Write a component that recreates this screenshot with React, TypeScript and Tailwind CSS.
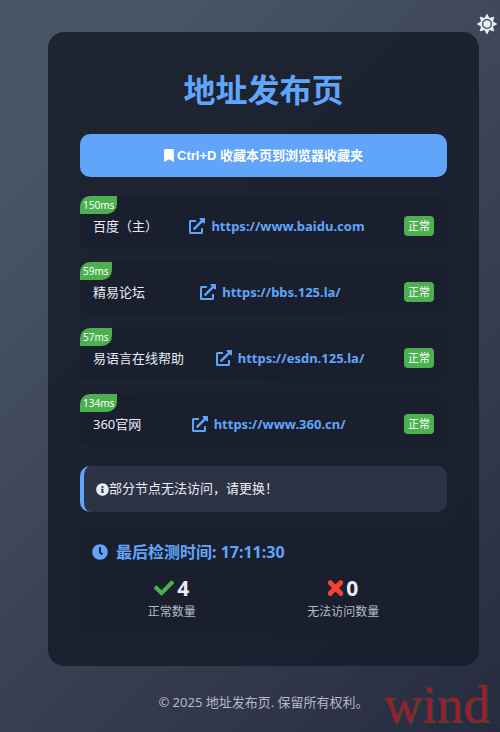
import type { ReactNode } from 'react';
import {
  FaBookmark,
  FaCheck,
  FaClock,
  FaExternalLinkAlt,
  FaInfoCircle,
  FaSun,
  FaTimes,
} from 'react-icons/fa';

interface Site {
  name: string;
  url: string;
  ping: number;
}

const sites: Site[] = [
  { name: '百度（主）', url: 'https://www.baidu.com', ping: 150 },
  { name: '精易论坛', url: 'https://bbs.125.la/', ping: 59 },
  { name: '易语言在线帮助', url: 'https://esdn.125.la/', ping: 57 },
  { name: '360官网', url: 'https://www.360.cn/', ping: 134 },
];

function SiteRow({ site }: { site: Site }) {
  return (
    <li className="relative flex h-[53px] items-center justify-between rounded-[10px] bg-[#1a1f2e] px-[13px] pt-1.5">
      <span className="absolute left-0 top-0 rounded-br-[10px] rounded-tl-[10px] bg-[#4caf50] px-[3px] text-[10px] leading-[18px] text-white">
        {site.ping}ms
      </span>
      <span className="text-[13px] leading-5">{site.name}</span>
      <a href={site.url} className="mr-2 flex items-center gap-1.5 text-[13px] font-bold leading-5 text-[#60a5fa]">
        <FaExternalLinkAlt size={16} />
        {site.url}
      </a>
      <span className="rounded bg-[#4caf50] px-1 text-[11px] leading-5 text-white">正常</span>
    </li>
  );
}

function Stat({ icon, value, label }: { icon: ReactNode; value: number; label: string }) {
  return (
    <div className="flex flex-col items-center">
      <div className="flex items-center gap-[3px] text-[21px] font-bold leading-7">
        {icon}
        {value}
      </div>
      <div className="text-xs leading-5 text-[#b4bac8]">{label}</div>
    </div>
  );
}

export default function App() {
  return (
    <div className="relative flex min-h-screen flex-col bg-linear-135 from-[#475567] from-15% via-[#3d4357] to-[#272b3f] pb-4 pl-12 pr-[21px] pt-8 font-['Noto_Sans','Noto_Sans_CJK_SC',sans-serif] text-[#e8ecf6]">
      <button type="button" aria-label="切换主题" className="absolute right-[3px] top-3.5 text-[#e8ecf6]">
        <FaSun size={20} />
      </button>

      <main className="rounded-2xl bg-linear-135 from-[#1f2431] to-[#1a1f2f] p-8">
        <h1 className="mb-[18px] text-center text-[32px] font-bold leading-[52px] text-[#60a5fa]">地址发布页</h1>

        <button
          type="button"
          className="mb-[19px] flex h-[43px] w-full items-center justify-center gap-[3px] rounded-[10px] bg-[#60a5fa] font-['Liberation_Sans','Noto_Sans_CJK_SC',sans-serif] text-[13px] font-bold text-white"
        >
          <FaBookmark className="h-[13px] w-2.5" />
          Ctrl+D 收藏本页到浏览器收藏夹
        </button>

        <ul className="mb-[19px] flex flex-col gap-[13px]">
          {sites.map((site) => (
            <SiteRow key={site.url} site={site} />
          ))}
        </ul>

        <div className="mb-4 flex h-[46px] items-center rounded-[10px] border-l-4 border-[#60a5fa] bg-[#2d3244] px-3 text-[13px]">
          <FaInfoCircle size={13} />
          部分节点无法访问，请更换！
        </div>

        <section className="rounded-[10px] bg-[#1a1f2e] py-3 pl-3 pr-6">
          <h2 className="mb-2.5 flex items-center gap-2 text-base font-bold leading-6 text-[#60a5fa]">
            <FaClock size={16} />
            最后检测时间: 17:11:30
          </h2>
          <div className="grid grid-cols-2 gap-3">
            <Stat icon={<FaCheck size={20} className="text-[#4caf50]" />} value={4} label="正常数量" />
            <Stat
              icon={<FaTimes strokeWidth={24} className="h-[22px] w-[15px] text-[#f44336]" />}
              value={0}
              label="无法访问数量"
            />
          </div>
        </section>
      </main>

      <footer className="mt-[26px] text-center text-[13px] leading-5 text-[#b4bac8]">
        © 2025 地址发布页. 保留所有权利。
      </footer>

      <span className="pointer-events-none absolute bottom-0 right-2.5 font-['Liberation_Serif',serif] text-[53px] leading-[56px] text-[#97202f] [text-shadow:1px_1px_0_#2c522e]">
        wind
      </span>
    </div>
  );
}
